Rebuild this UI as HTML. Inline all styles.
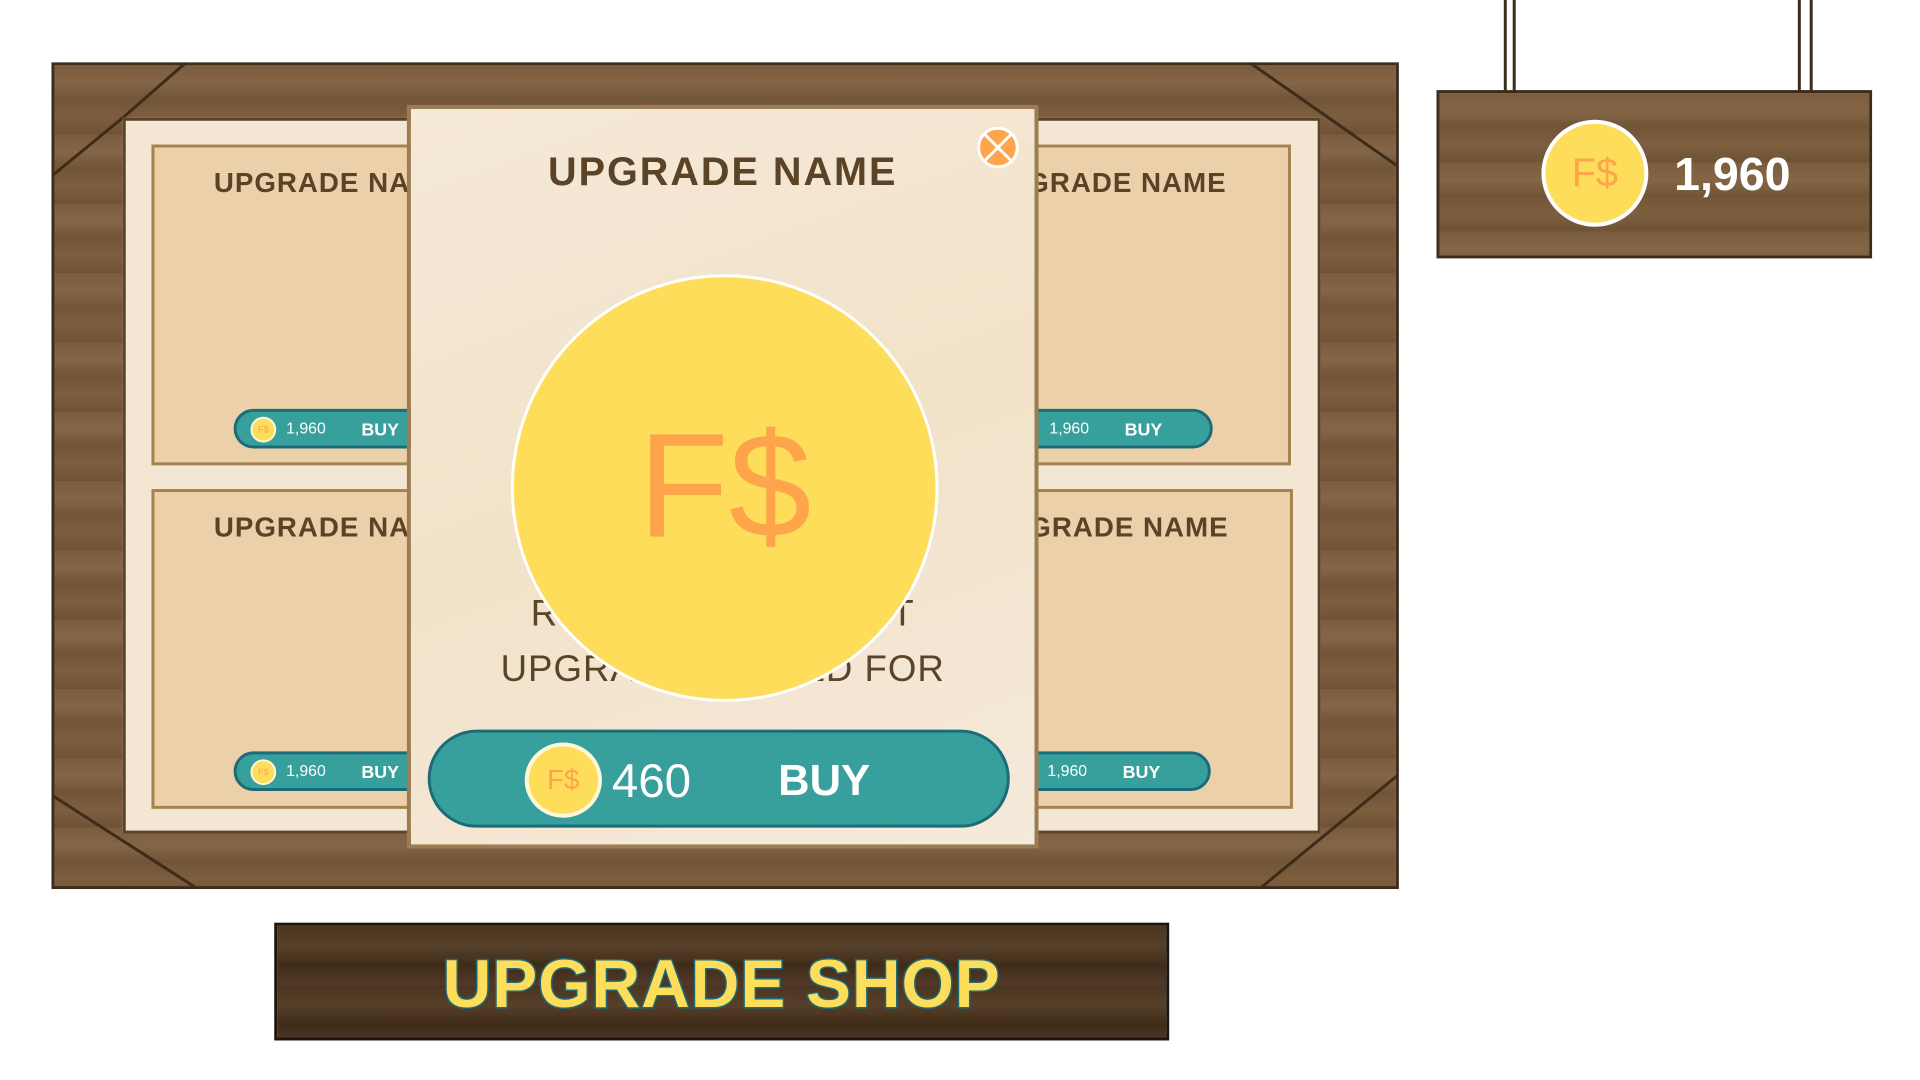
<!DOCTYPE html>
<html><head><meta charset="utf-8"><style>
*{margin:0;padding:0;box-sizing:border-box}
body{width:1920px;height:1080px;background:#fff;position:relative;overflow:hidden;font-family:"Liberation Sans",sans-serif}
#w{position:absolute;left:0;top:0;width:1940px;height:1091px;transform:scale(0.99);transform-origin:0 0}
.abs{position:absolute}
.wood{background:repeating-linear-gradient(180deg,#7b5d3e 0,#846547 18px,#725536 34px,#7d5f40 52px,#6f5234 70px);}
.card{position:absolute;background:#ebd0a9;border:3px solid #a5834f}
.ct{position:absolute;top:20px;font-weight:bold;font-size:28px;color:#5b4328;letter-spacing:1px;white-space:nowrap}
.sb{position:absolute;height:40px;background:#38a09c;border:3px solid #1c6b78;border-radius:20px;color:#fff}
.sb .c{position:absolute;left:14px;top:5px;width:26px;height:26px;border-radius:50%;background:#fedd5a;border:2px solid #fff8d8;font-size:9px;color:#fea54c;text-align:center;line-height:22px}
.sb .n{position:absolute;left:50px;top:9px;font-size:16px}
.sb .b{position:absolute;left:126px;top:8px;font-size:18px;font-weight:bold}
</style></head><body><div id="w">
<div class="abs wood" style="left:52px;top:63px;width:1361px;height:835px;border:3px solid #3d2c1a"></div>
<svg class="abs" style="left:52px;top:63px" width="1361" height="835">
<g stroke="#3d2c1a" stroke-width="3" fill="none">
<line x1="136" y1="0" x2="72" y2="56"/><line x1="72" y1="56" x2="0" y2="115"/>
<line x1="1210" y1="0" x2="1360" y2="105"/>
<line x1="0" y1="740" x2="148" y2="835"/>
<line x1="1220" y1="835" x2="1360" y2="720"/>
</g></svg>
<div class="abs" style="left:124px;top:119px;width:1210px;height:723px;background:#f3e6d2;border:3px solid #5a4428"></div>
<div class="card" style="left:153px;top:146px;width:560px;height:324px"><div class="ct" style="left:60px">UPGRADE NAME</div>
<div class="sb" style="left:80px;top:264px;width:220px"><div class="c">F$</div><div class="n">1,960</div><div class="b">BUY</div></div></div>
<div class="card" style="left:153px;top:494px;width:560px;height:323px"><div class="ct" style="left:60px">UPGRADE NAME</div>
<div class="sb" style="left:80px;top:262px;width:220px"><div class="c">F$</div><div class="n">1,960</div><div class="b">BUY</div></div></div>
<div class="card" style="left:745px;top:146px;width:559px;height:324px"><div class="ct" style="right:62px">UPGRADE NAME</div>
<div class="sb" style="right:76px;top:264px;width:240px"><div class="c" style="left:10px"></div><div class="n" style="left:72px">1,960</div><div class="b" style="left:148px">BUY</div></div></div>
<div class="card" style="left:745px;top:494px;width:561px;height:323px"><div class="ct" style="right:62px">UPGRADE NAME</div>
<div class="sb" style="right:80px;top:262px;width:240px"><div class="c" style="left:10px"></div><div class="n" style="left:72px">1,960</div><div class="b" style="left:148px">BUY</div></div></div>
<div class="abs" style="left:411px;top:106px;width:638px;height:751px;background:linear-gradient(160deg,#f5e9d8,#f2e2c9 50%,#f5eadb);border:4px solid #9c7c52"></div>
<div class="abs" style="left:411px;top:152px;width:638px;text-align:center;font-weight:bold;font-size:40px;color:#5b4328;letter-spacing:2px">UPGRADE NAME</div>
<div class="abs" style="left:987px;top:128px;width:42px;height:42px;border-radius:50%;background:#fea54c;border:3px solid #fff"></div>
<svg class="abs" style="left:987px;top:128px" width="42" height="42"><g stroke="#fff" stroke-width="3"><line x1="8" y1="8" x2="34" y2="34"/><line x1="34" y1="8" x2="8" y2="34"/></g></svg>
<div class="abs" style="left:411px;top:592px;width:638px;text-align:center;font-size:37px;color:#5b4328;line-height:56px;letter-spacing:1px">REPLACE THIS TEXT<br>UPGRADE IS USED FOR</div>
<div class="abs" style="left:516px;top:277px;width:432px;height:432px;border-radius:50%;background:#fedd5a;border:3px solid #fff"></div>
<div class="abs" style="left:516px;top:405px;width:432px;text-align:center;font-size:150px;color:#fea54c;line-height:170px">F$</div>
<div class="abs" style="left:432px;top:737px;width:588px;height:99px;border-radius:50px;background:#38a09c;border:3px solid #1c6b78"></div>
<div class="abs" style="left:530px;top:750px;width:78px;height:76px;border-radius:50%;background:#fedd5a;border:4px solid #fff8d8;text-align:center;line-height:68px;font-size:28px;color:#fea54c">F$</div>
<div class="abs" style="left:618px;top:762px;font-size:48px;color:#fff">460</div>
<div class="abs" style="left:786px;top:764px;font-size:44px;font-weight:bold;color:#fff">BUY</div>
<div class="abs" style="left:1519px;top:0;width:12px;height:94px;border-left:3px solid #3d2c1a;border-right:3px solid #3d2c1a"></div>
<div class="abs" style="left:1816px;top:0;width:15px;height:94px;border-left:3px solid #3d2c1a;border-right:3px solid #3d2c1a"></div>
<div class="abs wood" style="left:1451px;top:91px;width:440px;height:170px;border:3px solid #3d2c1a"></div>
<div class="abs" style="left:1557px;top:121px;width:108px;height:108px;border-radius:50%;background:#fedd5a;border:4px solid #fff;text-align:center;line-height:100px;font-size:40px;color:#fea54c">F$</div>
<div class="abs" style="left:1691px;top:148px;font-size:47px;font-weight:bold;color:#fff">1,960</div>
<div class="abs" style="left:277px;top:932px;width:904px;height:119px;border:3px solid #1e160c;background:repeating-linear-gradient(180deg,#4a3520 0,#574029 20px,#3f2c19 40px,#52392a 60px)"></div>
<div class="abs" style="left:277px;top:955px;width:904px;text-align:center;font-size:68px;font-weight:900;color:#fedd5a;letter-spacing:1px;-webkit-text-stroke:3px #1c6b78;paint-order:stroke fill">UPGRADE SHOP</div>
</div></body></html>
